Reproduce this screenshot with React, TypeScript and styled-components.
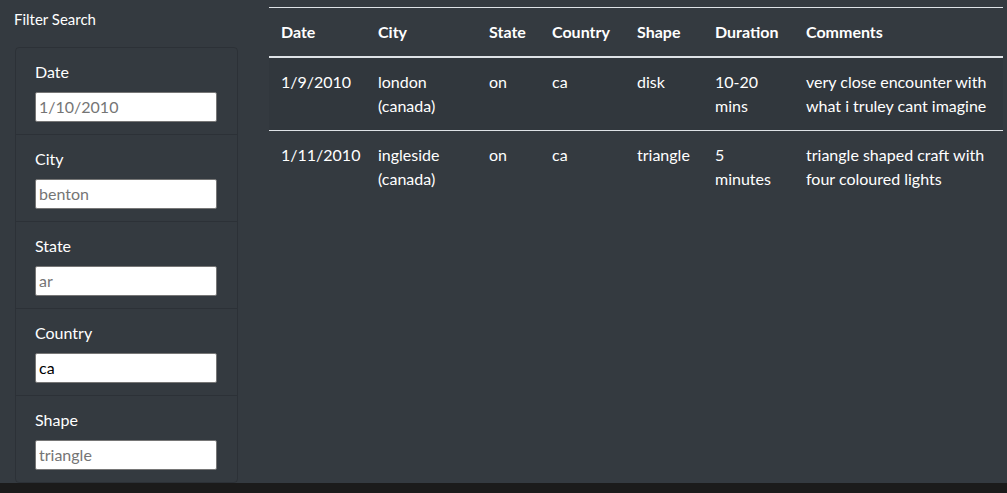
import React from "react";
import styled, { createGlobalStyle } from "styled-components";

const Global = createGlobalStyle`
  html, body { margin: 0; padding: 0; background: #1b1b1b; }
  body { font-family: Lato, "Noto Sans", "Liberation Sans", sans-serif; color: #fff; }
  * { box-sizing: border-box; }
`;

const Page = styled.div`
  display: flex;
  background: #343a40;
  height: 483px;
  width: 1007px;
`;

const Sidebar = styled.aside`
  width: 253px;
  padding: 0 15px;
  display: flex;
  flex-direction: column;
`;

const SideTitle = styled.h5`
  margin: 0;
  padding: 9px 0 0 0;
  margin-left: -1px;
  height: 47px;
  font-size: 15px;
  font-weight: 400;
  line-height: 20px;
`;

const Card = styled.ul`
  list-style: none;
  margin: 0;
  padding: 0;
  border: 1px solid rgba(0, 0, 0, 0.14);
  border-radius: 4px;
  width: 223px;
  height: 436px;
  overflow: hidden;
`;

const Item = styled.li`
  padding: 12px 19px 0 19px;
  height: 87px;
  border-bottom: 1px solid rgba(0, 0, 0, 0.14);
  &:last-child { border-bottom: none; }
`;

const Label = styled.label`
  display: block;
  font-size: 16px;
  line-height: 24px;
  margin-bottom: 8px;
`;

const Input = styled.input`
  display: block;
  width: 182px;
  height: 30px;
  border: 1px solid #767676;
  border-radius: 2px;
  background: #fff;
  padding: 0 3px 2px;
  font-family: inherit;
  font-size: 16px;
  color: #000;
  outline: none;
  &::placeholder { color: #757575; }
`;

const Main = styled.main`
  flex: 1;
  padding: 7px 4px 0 16px;
`;

const Table = styled.table`
  width: 734px;
  border-collapse: collapse;
  table-layout: fixed;
  font-size: 16px;
  line-height: 24px;
  color: #fff;
`;

const HeadCell = styled.th`
  text-align: left;
  font-weight: 700;
  padding: 12px;
  border-top: 1px solid #dee2e6;
  border-bottom: 2px solid #dee2e6;
  vertical-align: bottom;
`;

const Row = styled.tr<{ $striped?: boolean }>`
  background: ${(p) => (p.$striped ? "rgba(0,0,0,0.04)" : "transparent")};
`;

const Cell = styled.td`
  padding: 12px;
  vertical-align: top;
  border-top: 1px solid #dee2e6;
`;

const cols = [97, 111, 63, 85, 78, 91, 209];
const heads = ["Date", "City", "State", "Country", "Shape", "Duration", "Comments"];
const rows = [
  ["1/9/2010", "london (canada)", "on", "ca", "disk", "10-20 mins", "very close encounter with what i truley cant imagine"],
  ["1/11/2010", "ingleside (canada)", "on", "ca", "triangle", "5 minutes", "triangle shaped craft with four coloured lights"],
];

const filters: { label: string; placeholder?: string; value?: string }[] = [
  { label: "Date", placeholder: "1/10/2010" },
  { label: "City", placeholder: "benton" },
  { label: "State", placeholder: "ar" },
  { label: "Country", value: "ca" },
  { label: "Shape", placeholder: "triangle" },
];

export default function App() {
  return (
    <>
      <Global />
      <Page>
        <Sidebar>
          <SideTitle>Filter Search</SideTitle>
          <Card>
            {filters.map((f) => (
              <Item key={f.label}>
                <Label>{f.label}</Label>
                <Input placeholder={f.placeholder} defaultValue={f.value} />
              </Item>
            ))}
          </Card>
        </Sidebar>
        <Main>
          <Table>
            <colgroup>
              {cols.map((w, i) => (
                <col key={i} style={{ width: w }} />
              ))}
            </colgroup>
            <thead>
              <tr>
                {heads.map((h) => (
                  <HeadCell key={h}>{h}</HeadCell>
                ))}
              </tr>
            </thead>
            <tbody>
              {rows.map((r, i) => (
                <Row key={i} $striped={i % 2 === 0}>
                  {r.map((c, j) => (
                    <Cell key={j}>{c}</Cell>
                  ))}
                </Row>
              ))}
            </tbody>
          </Table>
        </Main>
      </Page>
    </>
  );
}
